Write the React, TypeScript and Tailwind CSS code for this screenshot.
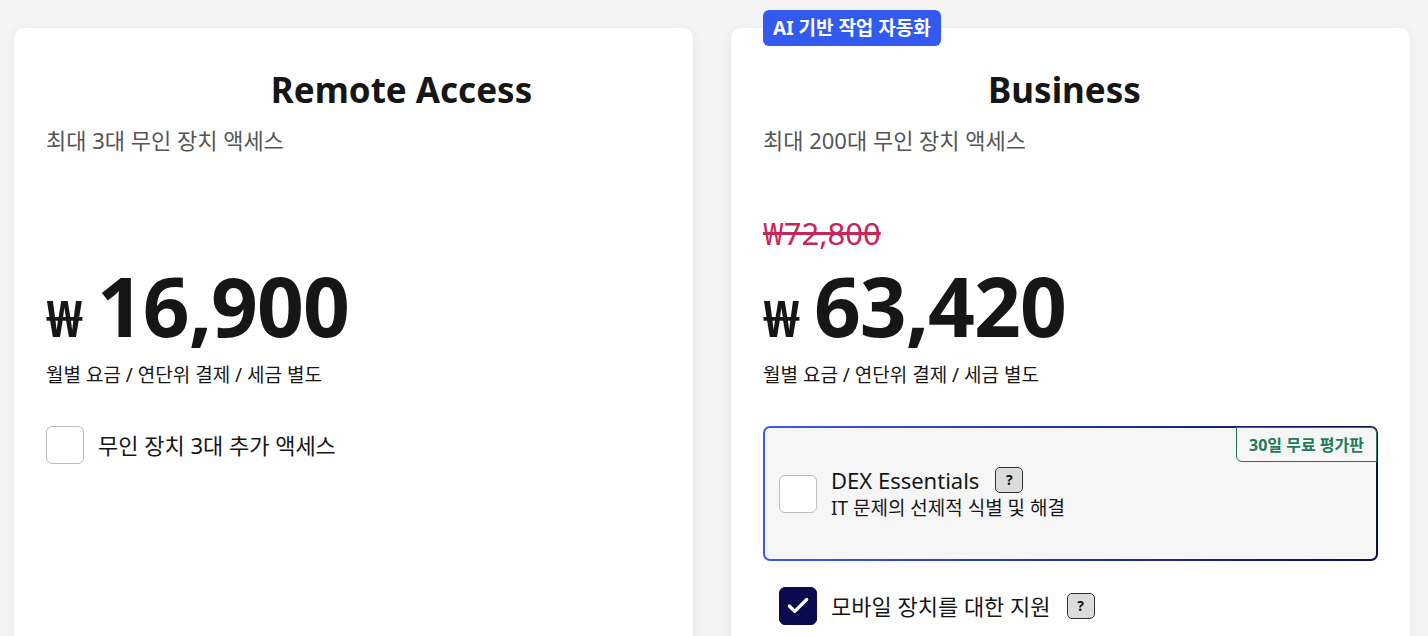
import { Check } from "lucide-react";

const font = { fontFamily: '"Noto Sans", "Noto Sans CJK KR", sans-serif' };

function Help() {
  return (
    <span className="inline-flex items-center justify-center w-[28px] h-[26px] rounded-[5px] border border-[#333] bg-[#dcdcdc] text-[14px] font-bold text-[#111] leading-none">?</span>
  );
}

function Box({ checked }: { checked?: boolean }) {
  if (checked) {
    return (
      <span className="flex items-center justify-center shrink-0 w-[38px] h-[38px] rounded-[6px] bg-[#0a0a4f] border border-[#0a0a4f]">
        <Check size={26} strokeWidth={3} className="text-white" />
      </span>
    );
  }
  return <span className="shrink-0 w-[38px] h-[38px] rounded-[6px] border border-[#bdbdbd] bg-white" />;
}

function App() {
  return (
    <div style={font} className="bg-[#f4f4f4] flex gap-[38px] pl-[14px] pt-[28px] text-[#161616] overflow-hidden h-[636px]">
      {/* Remote Access */}
      <div className="w-[679px] h-[700px] shrink-0 bg-white rounded-[10px] shadow-[0_2px_10px_rgba(0,0,0,0.08)] px-[32px] pt-[40px]">
        <h2 className="text-[35px] leading-[44px] font-bold text-center pl-[96px]">Remote Access</h2>
        <p className="mt-[14px] text-[22px] leading-[28px] text-[#555]">최대 3대 무인 장치 액세스</p>
        <div className="mt-[62px] h-[34px]" />
        <div className="mt-[14px] flex items-baseline gap-[14px] h-[84px] leading-none">
          <span className="text-[50px] font-bold">₩</span>
          <span className="text-[82px] font-bold tracking-[-1px]">16,900</span>
        </div>
        <p className="mt-[14px] text-[19px] leading-[26px]">월별 요금 / 연단위 결제 / 세금 별도</p>
        <div className="mt-[38px] flex items-center gap-[14px]">
          <Box />
          <span className="text-[22px]">무인 장치 3대 추가 액세스</span>
        </div>
      </div>

      {/* Business */}
      <div className="relative w-[679px] h-[700px] shrink-0 bg-white rounded-[10px] shadow-[0_2px_10px_rgba(0,0,0,0.08)] px-[32px] pt-[40px]">
        <span className="absolute left-[32px] top-[-18px] h-[36px] px-[10px] flex items-center rounded-[6px] bg-[#3259f0] text-white text-[19px] font-bold">AI 기반 작업 자동화</span>
        <h2 className="text-[35px] leading-[44px] font-bold text-center pr-[12px]">Business</h2>
        <p className="mt-[14px] text-[22px] leading-[28px] text-[#555]">최대 200대 무인 장치 액세스</p>
        <p className="mt-[62px] h-[34px] text-[31px] leading-[34px] text-[#c8265a] line-through">₩72,800</p>
        <div className="mt-[14px] flex items-baseline gap-[14px] h-[84px] leading-none">
          <span className="text-[50px] font-bold">₩</span>
          <span className="text-[82px] font-bold tracking-[-1px]">63,420</span>
        </div>
        <p className="mt-[14px] text-[19px] leading-[26px]">월별 요금 / 연단위 결제 / 세금 별도</p>
        <div className="mt-[38px] w-[615px] h-[135px] rounded-[7px] p-[2px] bg-gradient-to-r from-[#3a5cf5] to-[#0b0f4f]">
          <div className="relative h-full rounded-[5px] bg-[#f6f6f6] flex items-center gap-[14px] pl-[14px]">
            <span className="absolute top-[-1px] right-[-1px] h-[35px] px-[12px] flex items-center rounded-bl-[6px] rounded-tr-[6px] border border-[#1f7a57] bg-[#f6f6f6] text-[#1f7a57] text-[16px] font-bold">30일 무료 평가판</span>
            <Box />
            <div className="flex flex-col">
              <div className="flex items-center gap-[16px] h-[28px]">
                <span className="text-[22px] leading-[28px]">DEX Essentials</span>
                <Help />
              </div>
              <span className="text-[19px] leading-[28px]">IT 문제의 선제적 식별 및 해결</span>
            </div>
          </div>
        </div>
        <div className="mt-[26px] ml-[16px] flex items-center gap-[14px]">
          <Box checked />
          <span className="text-[22px]">모바일 장치를 대한 지원</span>
          <span className="ml-[2px]"><Help /></span>
        </div>
      </div>
    </div>
  );
}

export default App;
